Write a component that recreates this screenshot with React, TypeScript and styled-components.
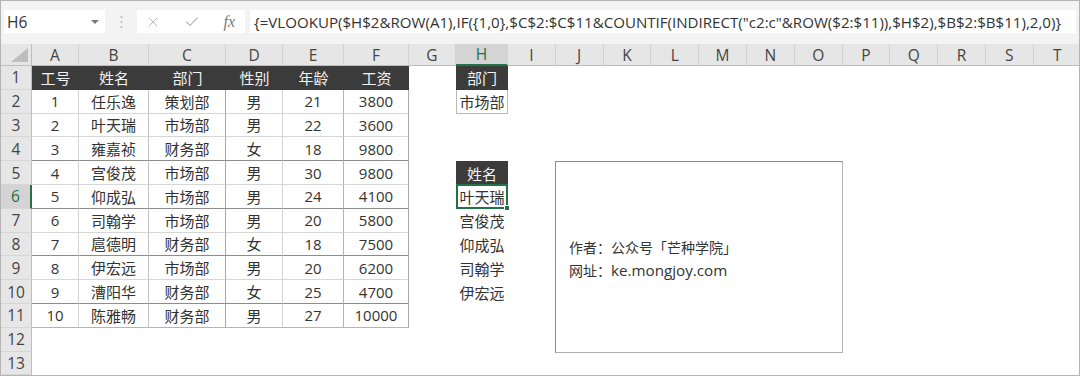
import React from 'react';
import styled, { createGlobalStyle, css } from 'styled-components';
import { X, Check } from 'lucide-react';

const GlobalStyle = createGlobalStyle`
  html, body { margin: 0; padding: 0; background: #fff; }
  body { font-family: "Open Sans", "Noto Sans CJK SC", sans-serif; }
`;

const GREEN = '#217346';

const Frame = styled.div`
  position: relative;
  width: 1080px;
  height: 376px;
  box-sizing: border-box;
  border: 1px solid #b4b4b4;
  overflow: hidden;
  display: flex;
  flex-direction: column;
  background: #fff;
`;

const Toolbar = styled.div`
  height: 43px;
  flex: none;
  background: #f3f3f3;
  display: flex;
  align-items: flex-start;
  padding: 9px 3px 0 3px;
  box-sizing: border-box;
`;

const NameBox = styled.div`
  width: 101px;
  height: 23px;
  flex: none;
  background: #fff;
  display: flex;
  align-items: center;
  justify-content: space-between;
  padding: 0 6px 0 3px;
  box-sizing: border-box;
  font-size: 15.5px;
  color: #333;
`;

const Caret = styled.span`
  width: 0;
  height: 0;
  border-left: 4px solid transparent;
  border-right: 4px solid transparent;
  border-top: 4px solid #7a7a7a;
`;

const Grip = styled.div`
  width: 32px;
  height: 23px;
  flex: none;
  display: flex;
  align-items: center;
  justify-content: center;
`;

const ActionBox = styled.div`
  width: 108px;
  height: 23px;
  flex: none;
  background: #fff;
  display: flex;
  align-items: center;
  justify-content: space-between;
  padding: 0 10px 0 8px;
  box-sizing: border-box;
  color: #b5b5b5;
`;

const Fx = styled.span`
  font-family: "Liberation Serif", serif;
  font-style: italic;
  font-size: 16px;
  color: #7a7a7a;
  line-height: 1;
`;

const FormulaBox = styled.div`
  flex: 1;
  height: 23px;
  margin-left: 5px;
  background: #fff;
  display: flex;
  align-items: center;
  padding-left: 4px;
  font-size: 15.1px;
  color: #333;
  white-space: nowrap;
  overflow: hidden;
`;

const Sheet = styled.div`
  flex: 1;
  display: grid;
  grid-template-columns: 31px 47px 70px 77px 57px 61px 65px 47px 52px repeat(12, 47.8px);
  grid-template-rows: 22px repeat(13, 23.8px);
  overflow: hidden;
`;

const ColHead = styled.div<{ $active?: boolean }>`
  display: flex;
  align-items: center;
  justify-content: center;
  box-sizing: border-box;
  background: #e6e6e6;
  border-right: 1px solid #d2d2d2;
  border-bottom: 1px solid #bdbdbd;
  font-size: 15.5px;
  color: #444;
  ${(p) =>
    p.$active &&
    css`
      background: #d4d4d4;
      color: ${GREEN};
      border-bottom: 2px solid ${GREEN};
    `}
`;

const Corner = styled.div`
  position: relative;
  background: #e6e6e6;
  border-right: 1px solid #bdbdbd;
  border-bottom: 1px solid #bdbdbd;
  box-sizing: border-box;
  &::after {
    content: '';
    position: absolute;
    right: 3px;
    bottom: 3px;
    width: 17px;
    height: 14px;
    background: #bdbdbd;
    clip-path: polygon(100% 0, 100% 100%, 0 100%);
  }
`;

const RowHead = styled.div<{ $active?: boolean }>`
  display: flex;
  align-items: center;
  justify-content: center;
  box-sizing: border-box;
  background: #e6e6e6;
  border-right: 1px solid #bdbdbd;
  border-bottom: 1px solid #d6d6d6;
  font-size: 15.5px;
  color: #444;
  ${(p) =>
    p.$active &&
    css`
      background: #d4d4d4;
      color: ${GREEN};
      border-right: 2px solid ${GREEN};
    `}
`;

type Kind = 'head' | 'data' | 'plain' | 'boxed' | 'selected';

const Cell = styled.div<{ $kind: Kind; $rb?: string; $bb?: string }>`
  position: relative;
  display: flex;
  align-items: center;
  justify-content: center;
  box-sizing: border-box;
  font-size: 15px;
  color: #333;
  white-space: nowrap;
  ${(p) =>
    p.$kind === 'head' &&
    css`
      background: #3b3b3b;
      color: #f2f2f2;
    `}
  ${(p) =>
    p.$kind === 'data' &&
    css`
      border-right: 1px solid ${p.$rb};
      border-bottom: 1px solid ${p.$bb};
    `}
  ${(p) =>
    p.$kind === 'boxed' &&
    css`
      border: 1px solid #b8b8b8;
      border-top: none;
    `}
  ${(p) =>
    p.$kind === 'selected' &&
    css`
      border: 2px solid ${GREEN};
      margin-top: -1px;
      &::after {
        content: '';
        position: absolute;
        right: -4px;
        bottom: -4px;
        width: 4px;
        height: 4px;
        background: ${GREEN};
        border: 1px solid #fff;
      }
    `}
`;

const NoteBox = styled.div`
  position: absolute;
  left: 554px;
  top: 160px;
  width: 288px;
  height: 192px;
  box-sizing: border-box;
  border: 1px solid #8c8c8c;
  border-right-color: #b0b0b0;
  border-bottom-color: #b0b0b0;
  background: #fff;
  display: flex;
  flex-direction: column;
  justify-content: center;
  padding: 4px 0 0 13px;
  font-size: 14px;
  line-height: 22px;
  color: #333;
`;

const Latin = styled.span`
  font-size: 15.2px;
`;

const letters = ['A','B','C','D','E','F','G','H','I','J','K','L','M','N','O','P','Q','R','S','T'];
const header = ['工号', '姓名', '部门', '性别', '年龄', '工资'];
const data = [
  ['1', '任乐逸', '策划部', '男', '21', '3800'],
  ['2', '叶天瑞', '市场部', '男', '22', '3600'],
  ['3', '雍嘉祯', '财务部', '女', '18', '9800'],
  ['4', '宫俊茂', '市场部', '男', '30', '9800'],
  ['5', '仰成弘', '市场部', '男', '24', '4100'],
  ['6', '司翰学', '市场部', '男', '20', '5800'],
  ['7', '扈德明', '财务部', '女', '18', '7500'],
  ['8', '伊宏远', '市场部', '男', '20', '6200'],
  ['9', '漕阳华', '财务部', '女', '25', '4700'],
  ['10', '陈雅畅', '财务部', '男', '27', '10000'],
];
const colRight = ['#d4d4d4', '#c4c4c4', '#a8a8a8', '#d4d4d4', '#b4b4b4', '#a8a8a8'];
const darkRows = [4, 6, 8, 10];

const hCol: Record<number, { kind: Kind; text: string }> = {
  1: { kind: 'head', text: '部门' },
  2: { kind: 'boxed', text: '市场部' },
  5: { kind: 'head', text: '姓名' },
  6: { kind: 'selected', text: '叶天瑞' },
  7: { kind: 'plain', text: '宫俊茂' },
  8: { kind: 'plain', text: '仰成弘' },
  9: { kind: 'plain', text: '司翰学' },
  10: { kind: 'plain', text: '伊宏远' },
};

const formula =
  '{=VLOOKUP($H$2&ROW(A1),IF({1,0},$C$2:$C$11&COUNTIF(INDIRECT("c2:c"&ROW($2:$11)),$H$2),$B$2:$B$11),2,0)}';

export default function App() {
  const cells: React.ReactNode[] = [];
  cells.push(<Corner key="corner" />);
  letters.forEach((l) => cells.push(<ColHead key={`h${l}`} $active={l === 'H'}>{l}</ColHead>));
  for (let r = 1; r <= 13; r++) {
    cells.push(<RowHead key={`r${r}`} $active={r === 6}>{r}</RowHead>);
    letters.forEach((_, c) => {
      const key = `c${r}-${c}`;
      if (c < 6 && r === 1) {
        cells.push(<Cell key={key} $kind="head">{header[c]}</Cell>);
      } else if (c < 6 && r >= 2 && r <= 11) {
        const bb = darkRows.includes(r) ? '#8c8c8c' : r === 11 ? '#b4b4b4' : '#d6d6d6';
        cells.push(
          <Cell key={key} $kind="data" $rb={colRight[c]} $bb={bb}>
            {data[r - 2][c]}
          </Cell>
        );
      } else if (c === 7 && hCol[r]) {
        cells.push(<Cell key={key} $kind={hCol[r].kind}>{hCol[r].text}</Cell>);
      } else {
        cells.push(<Cell key={key} $kind="plain" />);
      }
    });
  }

  return (
    <>
      <GlobalStyle />
      <Frame>
        <Toolbar>
          <NameBox>
            <span>H6</span>
            <Caret />
          </NameBox>
          <Grip>
            <svg width="3" height="14" viewBox="0 0 3 14">
              <circle cx="1.5" cy="2" r="1" fill="#b8b8b8" />
              <circle cx="1.5" cy="7" r="1" fill="#b8b8b8" />
              <circle cx="1.5" cy="12" r="1" fill="#b8b8b8" />
            </svg>
          </Grip>
          <ActionBox>
            <X size={16} strokeWidth={1.4} />
            <Check size={16} strokeWidth={1.6} />
            <Fx>fx</Fx>
          </ActionBox>
          <FormulaBox>{formula}</FormulaBox>
        </Toolbar>
        <Sheet>{cells}</Sheet>
        <NoteBox>
          <div>作者：公众号「芒种学院」</div>
          <div>
            网址：<Latin>ke.mongjoy.com</Latin>
          </div>
        </NoteBox>
      </Frame>
    </>
  );
}
